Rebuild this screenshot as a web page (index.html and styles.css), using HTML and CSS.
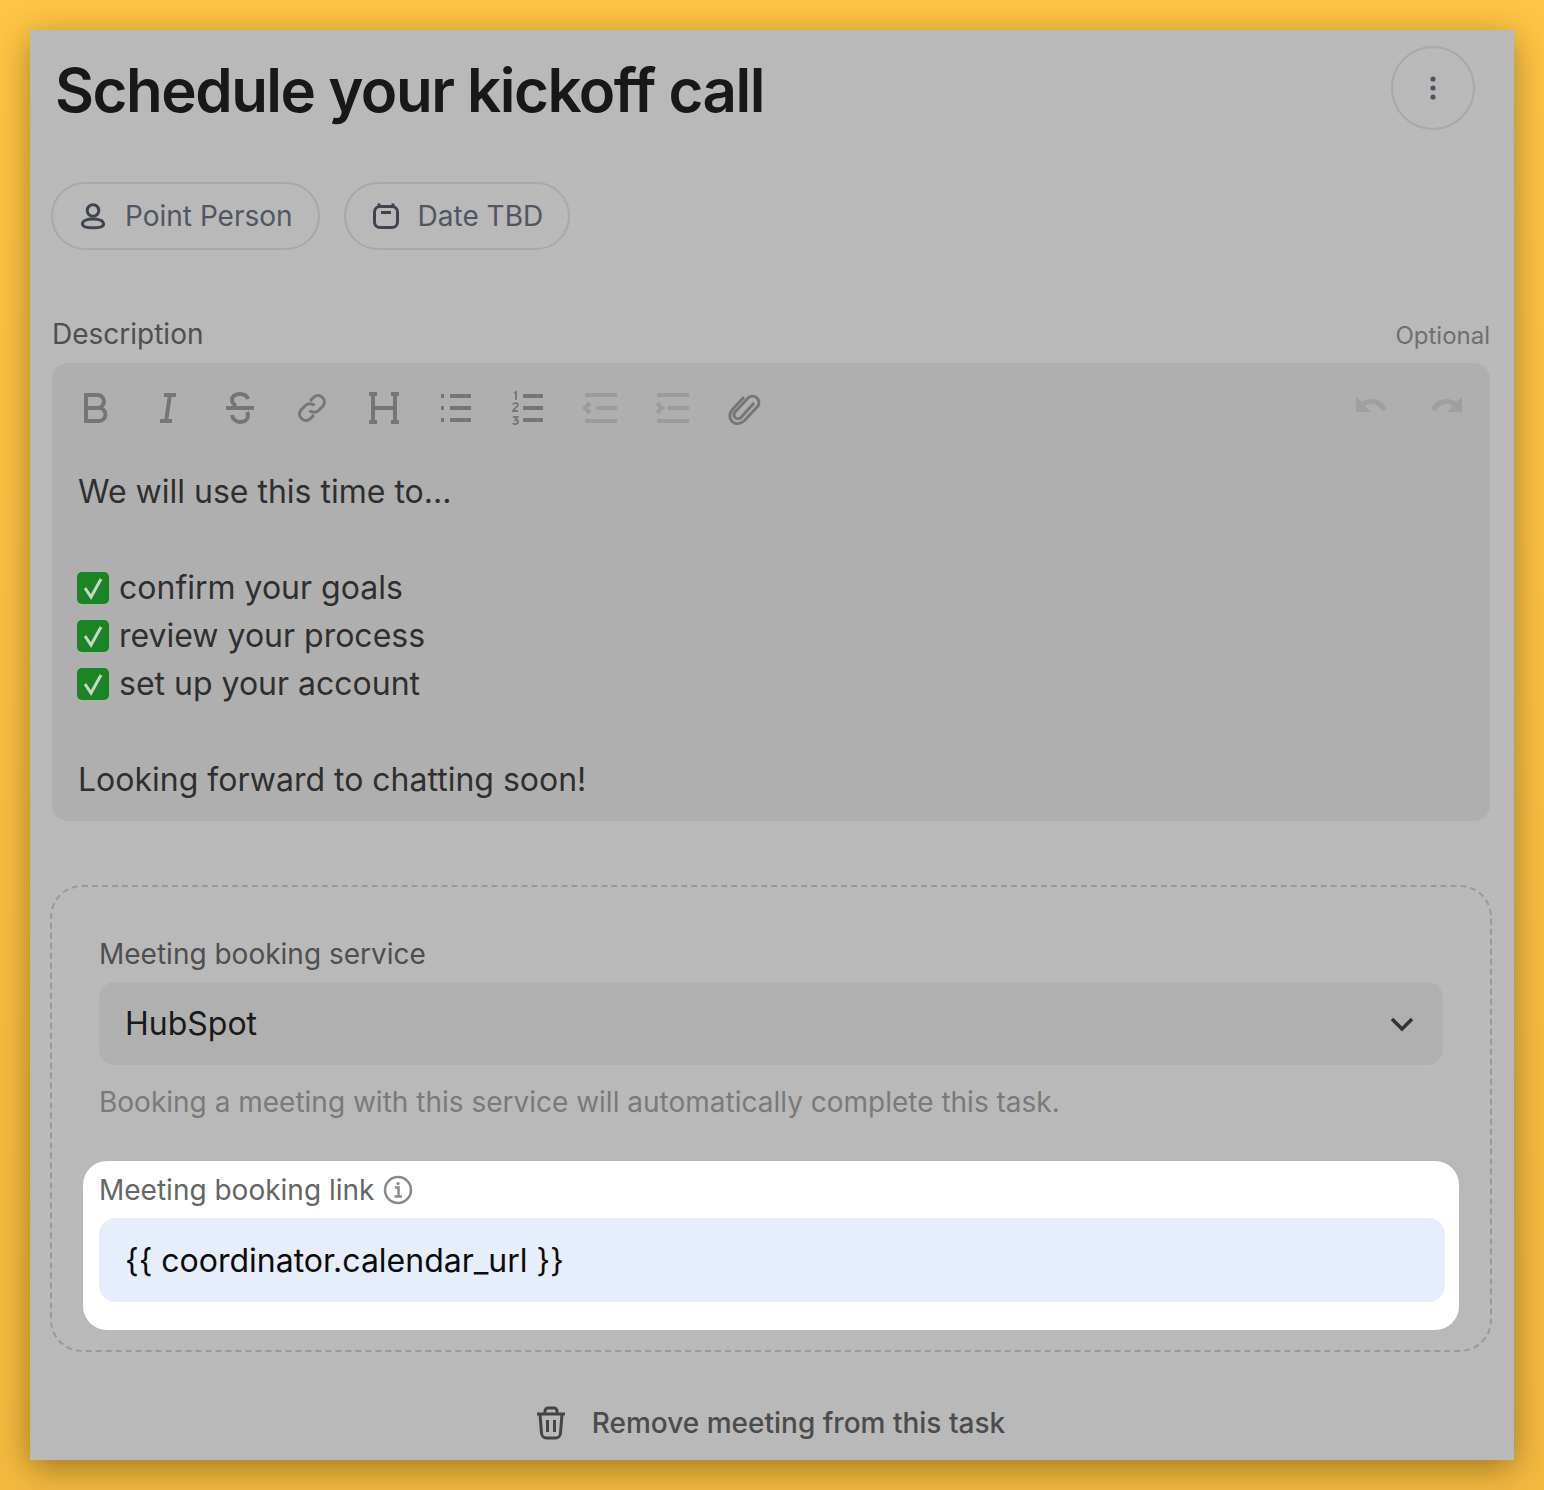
FILE: index.html
```html
<!DOCTYPE html>
<html lang="en">

<head>
    <meta charset="UTF-8">
    <title>Schedule your kickoff call</title>
    <link rel="stylesheet" href="styles.css">
</head>

<body>
    <div class="panel">
        <div class="task-header">
            <h1>Schedule your kickoff call</h1>
            <button class="kebab">
                <svg width="8" height="28" viewBox="0 0 8 28"><circle cx="4" cy="5" r="2.6"/><circle cx="4" cy="14" r="2.6"/><circle cx="4" cy="23" r="2.6"/></svg>
            </button>
        </div>

        <div class="chips">
            <div class="chip">
                <svg class="chip-icon" width="28" height="28" viewBox="0 0 28 28"><circle cx="14" cy="8.5" r="5.8"/><path d="M14 17c-6 0-10.600 1.800-10.600 5 0 2.600 3 3.800 10.600 3.800s10.600-1.200 10.600-3.800c0-3.200-4.600-5-10.600-5z"/></svg>
                Point Person
            </div>
            <div class="chip">
                <svg class="chip-icon" width="28" height="28" viewBox="0 0 28 28"><rect x="2.500" y="4.500" width="23" height="21" rx="5.500"/><path d="M9 10.500h10"/><path d="M7 5V1.500M21 5V1.500"/></svg>
                Date TBD
            </div>
        </div>

        <div class="field-head">
            <span class="label">Description</span>
            <span class="optional">Optional</span>
        </div>

        <div class="editor">
            <div class="toolbar">
                <div class="tool"><svg viewBox="0 0 36 36"><path d="M8 5h11.500a6.500 6.500 0 0 1 0 13H8zM8 18h13a6.500 6.500 0 0 1 0 13H8z"/></svg></div>
                <div class="tool"><svg viewBox="0 0 36 36"><path d="M14 5h12M10 31h12M20 5l-4 26"/></svg></div>
                <div class="tool"><svg viewBox="0 0 36 36"><path d="M4 18h28M26 9c-1-3-4-5-8-5-5 0-8 2.500-8 6 0 2.500 1.500 4.500 4 6M10 25c.5 4 4 7 8 7 5 0 8-2.500 8-6.500 0-1.500-.5-2.500-1-3.500"/></svg></div>
                <div class="tool"><svg viewBox="0 0 36 36"><path class="thin" d="M16 11l4-4a6.400 6.400 0 0 1 9 9l-4.500 4.500a6.400 6.400 0 0 1-9 0M20 25l-4 4a6.400 6.400 0 0 1-9-9l4.500-4.500a6.400 6.400 0 0 1 9 0"/></svg></div>
                <div class="tool"><svg viewBox="0 0 36 36"><path d="M7 4v28M29 4v28M7 18h22M3 4h8M25 4h8M3 32h8M25 32h8"/></svg></div>
                <div class="tool"><svg viewBox="0 0 36 36"><path d="M12 6h21M12 18h21M12 30h21M3 6h3M3 18h3M3 30h3"/></svg></div>
                <div class="tool">
                    <svg viewBox="0 0 36 36">
                        <path d="M13 6h20M13 18h20M13 30h20"/>
                        <path class="num" d="M4 3l2-1v8M3 14.500c1-2 5-2 5 .5 0 2-4 3-5 6h5M3 27h4.500l-2 3c2 0 3 1 2.500 2.500S4 35 3 33"/>
                    </svg>
                </div>
                <div class="tool dim"><svg viewBox="0 0 36 36"><path d="M3 5h32M14 18h21M3 31h32M8 13l-5 5 5 5"/></svg></div>
                <div class="tool dim"><svg viewBox="0 0 36 36"><path d="M3 5h32M14 18h21M3 31h32M3 13l5 5-5 5"/></svg></div>
                <div class="tool"><svg viewBox="0 0 36 36"><path class="thin" d="M28 13L15 27.500a4 4 0 0 1-6-5.500L22.500 7.500a6.500 6.500 0 0 1 9.500 8.500L18.500 30.500c-4 4-9.500 4-12.500 1s-3-8 .5-12L18 7"/></svg></div>
                <div class="tool-gap"></div>
                <div class="tool faint"><svg viewBox="0 0 36 36"><path class="solid" d="M1 7v15h15l-6-6c3-2 6-2.500 9.500-1.500 3.500 1 6 3.500 7.500 6.500l5-1.500c-2-5-6-8.500-11-10-5-1.300-10-.5-14 2.500z"/></svg></div>
                <div class="tool faint"><svg viewBox="0 0 36 36"><path class="solid" d="M35 7v15H20l6-6c-3-2-6-2.500-9.500-1.500C13 15.500 10.500 18 9 21l-5-1.500c2-5 6-8.500 11-10 5-1.300 10-.5 14 2.500z"/></svg></div>
            </div>
            <div class="editor-body">
                <div>We will use this time to...</div>
                <div class="blank"></div>
                <div class="todo"><svg class="check" viewBox="0 0 32 32"><rect width="32" height="32" rx="5"/><path d="M8 16l6 9 10-18"/></svg>confirm your goals</div>
                <div class="todo"><svg class="check" viewBox="0 0 32 32"><rect width="32" height="32" rx="5"/><path d="M8 16l6 9 10-18"/></svg>review your process</div>
                <div class="todo"><svg class="check" viewBox="0 0 32 32"><rect width="32" height="32" rx="5"/><path d="M8 16l6 9 10-18"/></svg>set up your account</div>
                <div class="blank"></div>
                <div>Looking forward to chatting soon!</div>
            </div>
        </div>

        <div class="meeting-box">
            <div class="label">Meeting booking service</div>
            <div class="select">
                HubSpot
                <svg width="26" height="16" viewBox="0 0 26 16"><path d="M3 3l10 10L23 3"/></svg>
            </div>
            <div class="help">Booking a meeting with this service will automatically complete this task.</div>

            <div class="highlight">
                <div class="label link-label">
                    Meeting booking link
                    <svg width="30" height="30" viewBox="0 0 30 30"><circle cx="15" cy="15" r="13"/><path d="M12 12.500h3.500V21M11.500 21.500h7.500"/><circle class="dot" cx="15" cy="8.500" r="1.600"/></svg>
                </div>
                <div class="link-input">{{ coordinator.calendar_url }}</div>
            </div>
        </div>

        <div class="remove-row">
            <svg width="32" height="34" viewBox="0 0 32 34"><path d="M2 8h28M10 8V5a3 3 0 0 1 3-3h6a3 3 0 0 1 3 3v3M5 8l1.500 19a5 5 0 0 0 5 5h9a5 5 0 0 0 5-5L27 8M12.500 14v12M19.500 14v12"/></svg>
            Remove meeting from this task
        </div>
    </div>
</body>

</html>
```

FILE: styles.css
```css
* {
    box-sizing: border-box;
}

html,
body {
    margin: 0;
    height: 1490px;
    overflow: hidden;
}

body {
    padding: 30px;
    background: linear-gradient(#ffc444, #f2b93d);
    font-family: Inter, "Liberation Sans", sans-serif;
}

.panel {
    height: 1430px;
    padding: 16px 24px 0 22px;
    background: #b9b9b9;
    box-shadow: 0 8px 32px rgba(0, 0, 0, 0.35);
}

.task-header {
    display: flex;
    justify-content: space-between;
    align-items: center;
    height: 84px;
    padding-left: 3px;
    padding-right: 15px;
}

h1 {
    margin: 0 0 -3px;
    font-size: 60px;
    font-weight: 600;
    letter-spacing: -1.5px;
    color: #181818;
}

.kebab {
    display: flex;
    align-items: center;
    justify-content: center;
    width: 84px;
    height: 84px;
    padding: 0;
    background: none;
    border: 2px solid #a7a8ac;
    border-radius: 50%;
}

.kebab svg {
    fill: #4f5461;
}

.chips {
    display: flex;
    gap: 24px;
    margin-top: 52px;
    margin-left: -1px;
}

.chip {
    display: flex;
    align-items: center;
    gap: 18px;
    height: 68px;
    padding: 0 25px 0 26px;
    border: 2px solid #a7a8ac;
    border-radius: 34px;
    font-size: 28px;
    color: #515662;
}

.chip-icon {
    fill: none;
    stroke: #3f4450;
    stroke-width: 3;
}

.field-head {
    display: flex;
    justify-content: space-between;
    align-items: center;
    margin-top: 67px;
    height: 34px;
}

.label {
    font-size: 28px;
    line-height: 34px;
    color: #4f4f4f;
}

.optional {
    font-size: 24px;
    color: #6f6f6f;
    padding-top: 3px;
}

.editor {
    margin-top: 12px;
    height: 458px;
    background: #afafaf;
    border-radius: 16px;
}

.toolbar {
    display: flex;
    height: 105px;
    padding: 27px 9px 0 8px;
}

.tool {
    display: flex;
    justify-content: center;
    width: 72px;
    height: 36px;
}

.tool svg {
    width: 36px;
    height: 36px;
    fill: none;
    stroke: #767676;
    stroke-width: 4;
}

.tool .thin {
    stroke-width: 3;
}

.tool .num {
    stroke-width: 1.800;
}

.tool .solid {
    fill: #a0a0a0;
    stroke: none;
}

.tool.dim svg {
    stroke: #9c9c9c;
}

.tool-gap {
    flex: 1;
}

.editor-body {
    padding-left: 26px;
    font-size: 32px;
    line-height: 48px;
    color: #2f2f2f;
}

.blank {
    height: 48px;
}

.todo {
    display: flex;
    align-items: center;
    height: 48px;
}

.check {
    width: 32px;
    height: 32px;
    margin-left: -1px;
    margin-right: 10px;
}

.check rect {
    fill: #1b8525;
}

.check path {
    fill: none;
    stroke: #c9d6c6;
    stroke-width: 3;
}

.meeting-box {
    margin: 64px -2px 0;
    height: 467px;
    padding: 50px 47px 0;
    border: 2px dashed #999;
    border-radius: 32px;
}

.select {
    display: flex;
    justify-content: space-between;
    align-items: center;
    height: 83px;
    margin-top: 11px;
    padding: 0 28px 0 26px;
    background: #b0b0b0;
    border-radius: 16px;
    font-size: 32px;
    color: #1a1a1a;
}

.select svg {
    fill: none;
    stroke: #333;
    stroke-width: 3.500;
}

.help {
    margin-top: 20px;
    font-size: 28px;
    line-height: 34px;
    color: #7a7a7a;
}

.highlight {
    margin: 42px -16px 0;
    height: 169px;
    padding: 12px 14px 0 16px;
    background: #fff;
    border-radius: 24px;
}

.link-label {
    display: flex;
    align-items: center;
    gap: 9px;
    color: #666;
}

.link-label svg {
    fill: none;
    stroke: #8a8a8a;
    stroke-width: 2.500;
}

.link-label .dot {
    fill: #8a8a8a;
    stroke: none;
}

.link-input {
    display: flex;
    align-items: center;
    height: 84px;
    margin-top: 11px;
    padding-left: 26px;
    background: #e7eefb;
    border-radius: 16px;
    font-size: 32px;
    color: #0b0b0b;
}

.remove-row {
    display: flex;
    justify-content: center;
    align-items: center;
    gap: 25px;
    margin-top: 53px;
    height: 36px;
    padding-right: 2px;
    font-size: 28px;
    font-weight: 500;
    color: #4c4c4c;
}

.remove-row svg {
    fill: none;
    stroke: #454545;
    stroke-width: 3;
}
```
